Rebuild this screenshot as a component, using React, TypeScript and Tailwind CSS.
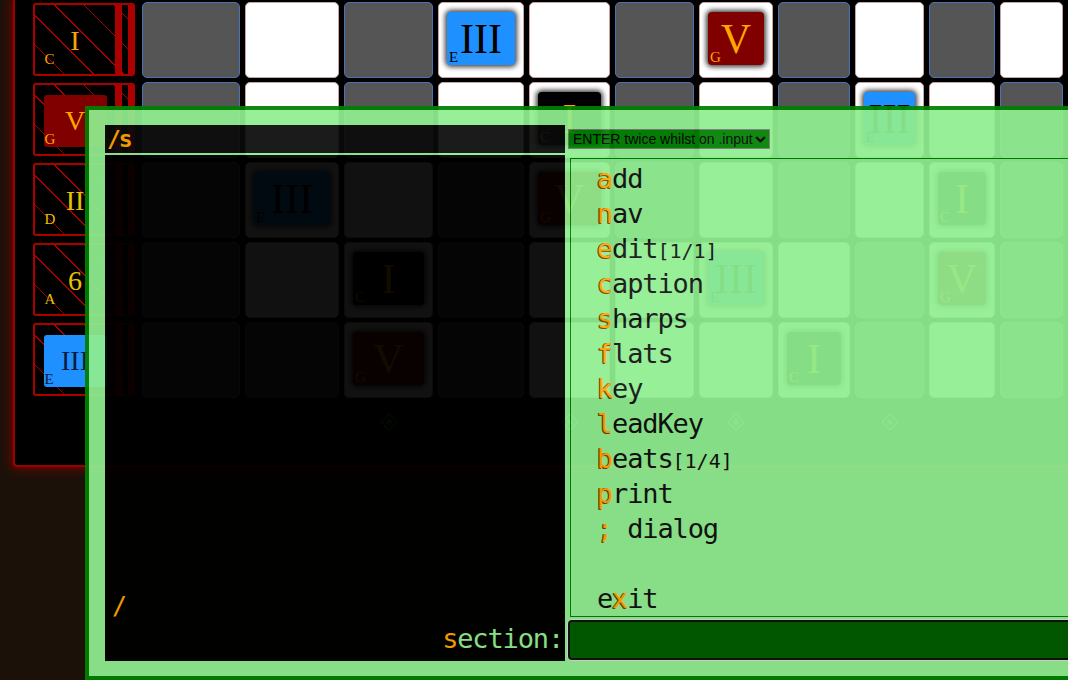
import { ChevronDown } from "lucide-react";

type Card = "blue" | "red" | "black";
type Cell = { w: boolean; card?: Card };

const COLS = [98, 94, 89, 86, 81, 79, 74, 72, 69, 66, 63, 60];

const W = (card?: Card): Cell => ({ w: true, card });
const G = (card?: Card): Cell => ({ w: false, card });

const ROWS: Cell[][] = [
  [G(), W(), G(), W("blue"), W(), G(), W("red"), G(), W(), G(), W(), G()],
  [G(), W(), G(), W(), W("black"), G(), W(), G(), W("blue"), W(), G(), W()],
  [G(), W("blue"), W(), G(), W("red"), G(), W(), G(), W(), W("black"), G(), W()],
  [G(), W(), W("black"), G(), W(), W(), W("blue"), W(), G(), W("red"), G(), W()],
  [G(), G(), W("red"), G(), W(), W(), W(), W("black"), G(), W(), G(), W()],
];

const CARD = {
  blue: { bg: "bg-[#1e90ff]", text: "text-black", num: "III", key: "E" },
  red: { bg: "bg-[#800000]", text: "text-[#ffa500]", num: "V", key: "G" },
  black: { bg: "bg-black", text: "text-[#ffa500]", num: "I", key: "C" },
};

const SIDE = [
  { num: "I", key: "C", bg: "bg-transparent", text: "text-[#ffa500]" },
  { num: "V", key: "G", bg: "bg-[#800000]", text: "text-[#ffa500]" },
  { num: "II", key: "D", bg: "bg-transparent", text: "text-[#e5c100]" },
  { num: "6", key: "A", bg: "bg-transparent", text: "text-[#e5c100]" },
  { num: "III", key: "E", bg: "bg-[#1e90ff]", text: "text-[#0a1a40]" },
];

const MENU: { hot: string; rest: string; tag?: string }[] = [
  { hot: "a", rest: "dd" },
  { hot: "n", rest: "av" },
  { hot: "e", rest: "dit", tag: "[1/1]" },
  { hot: "c", rest: "aption" },
  { hot: "s", rest: "harps" },
  { hot: "f", rest: "lats" },
  { hot: "k", rest: "ey" },
  { hot: "l", rest: "eadKey" },
  { hot: "b", rest: "eats", tag: "[1/4]" },
  { hot: "p", rest: "rint" },
  { hot: ";", rest: " dialog" },
];

const hotCls =
  "text-[#ffa500] [text-shadow:-1px_1px_0_#7a4000,-1px_0_0_#7a4000]";

function ChordCell({ cell, width }: { cell: Cell; width: number }) {
  const c = cell.card ? CARD[cell.card] : null;
  return (
    <div
      className={`h-[76px] shrink-0 rounded-[5px] border flex justify-center pt-[9px] ${
        cell.w ? "bg-white border-[#c9a3a3]" : "bg-[#555] border-[#4a72b8]"
      }`}
      style={{ width }}
    >
      {c && (
        <div
          className={`relative h-[53px] rounded-[4px] shadow-[0_0_5px_2px_rgba(0,0,0,0.75)] flex items-center justify-center font-['Liberation_Serif',serif] ${c.bg} ${c.text}`}
          style={{ width: width - 18 }}
        >
          <span className="text-[42px] leading-none">{c.num}</span>
          <span className="absolute left-[2px] bottom-0 text-[15px] leading-none">{c.key}</span>
        </div>
      )}
    </div>
  );
}

function SideBox({ item }: { item: (typeof SIDE)[number] }) {
  return (
    <div className="flex h-[73px] w-[102px] rounded-[3px] border-2 border-r-[7px] border-[#aa0000] bg-[repeating-linear-gradient(45deg,transparent_0_20px,#aa0000_20px_21px)]">
      <div className="w-[80px] flex items-center justify-center pt-[2px]">
        <div
          className={`relative w-[63px] h-[52px] rounded-[3px] flex items-center justify-center font-['Liberation_Serif',serif] ${item.bg} ${item.text}`}
        >
          <span className="text-[28px] leading-none">{item.num}</span>
          <span className="absolute left-[1px] bottom-0 text-[15px] leading-none">{item.key}</span>
        </div>
      </div>
      <div className="w-[7px] bg-[#aa0000]" />
      <div className="w-[6px]" />
    </div>
  );
}

function Diamond() {
  return (
    <svg width="18" height="18" viewBox="0 0 18 18">
      <path d="M9 1 L17 9 L9 17 L1 9 Z" fill="none" stroke="#1f7a1f" strokeWidth="1.5" />
      <path d="M9 5.5 L12.5 9 L9 12.5 L5.5 9 Z" fill="#1f7a1f" />
    </svg>
  );
}

export default function App() {
  return (
    <div className="relative w-[1068px] h-[680px] overflow-hidden bg-[#1c1108]">
      {/* Board */}
      <div className="ml-[13px] h-[467px] w-[1200px] flex bg-black border-l-2 border-b-2 border-[#9a0000] rounded-bl-[4px] shadow-[0_0_10px_2px_#7a0000]">
        <div className="pl-[18px] pt-[3px] flex flex-col gap-[7px]">
          {SIDE.map((s) => (
            <SideBox key={s.num + s.key} item={s} />
          ))}
        </div>
        <div className="pl-[7px] pt-[2px] flex flex-col gap-[4px]">
          {ROWS.map((row, r) => (
            <div key={r} className="flex gap-[5px]">
              {row.map((cell, i) => (
                <ChordCell key={i} cell={cell} width={COLS[i]} />
              ))}
            </div>
          ))}
          <div className="flex gap-[5px] mt-[11px]">
            {COLS.map((w, i) => (
              <div key={i} className="shrink-0 flex justify-center" style={{ width: w }}>
                {i % 2 === 0 && i > 0 && i < 9 && <Diamond />}
              </div>
            ))}
          </div>
        </div>
      </div>

      {/* Dialog */}
      <div className="absolute left-[85px] top-[106px] w-[1010px] border-4 border-[#008000] bg-[#90ee90] opacity-[0.93] pl-[16px] pt-[15px] pb-[15px] flex gap-[3px]">
        <div className="w-[460px] h-[536px] bg-black flex flex-col font-['DejaVu_Sans_Mono',monospace]">
          <div className="h-[28px] flex items-center pl-[2px] bg-[#0a0a0a]">
            <span className="text-[23px] font-bold tracking-[-2px] text-[#ffa500]">/s</span>
          </div>
          <div className="h-[2px] bg-[#90ee90]" />
          <div className="flex-1 flex flex-col justify-end pb-[6px]">
            <div className="pl-[7px] text-[25px] leading-[33px] text-[#ffa500]">/</div>
            <div className="pr-[2px] text-right text-[27px] tracking-[-1.15px] leading-[33px] text-[#90ee90]">
              <span className="text-[#ffa500]">s</span>ection:
            </div>
          </div>
        </div>

        <div className="flex-1 flex flex-col pt-[4px]">
          <div className="w-[202px] h-[20px] bg-[#008000] border border-[#777] flex items-center justify-between pl-[4px] pr-[1px] font-['Liberation_Sans',sans-serif] text-[14px] text-black">
            <span>ENTER twice whilst on .input</span>
            <ChevronDown size={15} strokeWidth={3.5} />
          </div>
          <div className="mt-[9px] ml-[2px] h-[459px] border border-[#008000] pl-[26px] pt-[2px] font-['DejaVu_Sans_Mono',monospace] text-[27px] tracking-[-1.15px] text-[#111] whitespace-pre">
            {MENU.map((m) => (
              <div key={m.hot + m.rest} className="h-[35px] leading-[35px]">
                <span className={hotCls}>{m.hot}</span>
                {m.rest}
                {m.tag && <span className="text-[20px] tracking-[0px] leading-none">{m.tag}</span>}
              </div>
            ))}
            <div className="h-[35px]" />
            <div className="h-[35px] leading-[35px]">
              e<span className={hotCls}>x</span>it
            </div>
          </div>
          <div className="mt-[3px] h-[40px] rounded-[4px] bg-[#005c00] border-2 border-[#111] shadow-[0_0_0_1px_#d8d8d8]" />
        </div>
      </div>
    </div>
  );
}
